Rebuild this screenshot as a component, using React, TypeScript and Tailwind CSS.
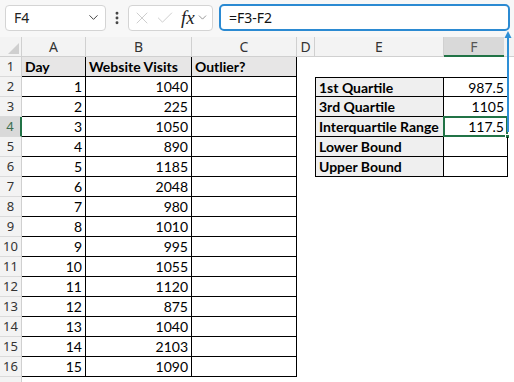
import { ChevronDown, EllipsisVertical, X, Check } from "lucide-react";

const visits = [
  [1, 1040], [2, 225], [3, 1050], [4, 890], [5, 1185], [6, 2048], [7, 980], [8, 1010],
  [9, 995], [10, 1055], [11, 1120], [12, 875], [13, 1040], [14, 2103], [15, 1090],
];

const stats: Record<number, [string, string]> = {
  2: ["1st Quartile", "987.5"],
  3: ["3rd Quartile", "1105"],
  4: ["Interquartile Range", "117.5"],
  5: ["Lower Bound", ""],
  6: ["Upper Bound", ""],
};

const cellFont = { fontFamily: "Lato, 'Liberation Sans', sans-serif" };
const uiFont = { fontFamily: "'Noto Sans', 'Open Sans', sans-serif" };

function RowHeader({ n }: { n: number }) {
  const active = n === 4;
  return (
    <div
      style={uiFont}
      className={`w-[22px] shrink-0 flex items-center justify-center text-[13px] border-b border-[#dadada] ${
        active
          ? "bg-[#d9d9d9] text-[#3b6e50] border-r-2 border-r-[#217346]"
          : "bg-[#f3f3f3] text-[#333] border-r border-r-[#d0d0d0]"
      }`}
    >
      {n}
    </div>
  );
}

function SheetRow({ n }: { n: number }) {
  const first = n === 1;
  const data = visits[n - 2];
  const stat = stats[n];
  return (
    <div className="flex h-5" style={cellFont}>
      <RowHeader n={n} />
      {/* A */}
      <div
        className={`w-[64px] shrink-0 border-b border-r border-black flex items-center text-[14px] ${
          first ? "bg-[#e7e6e6] font-bold pl-[3px]" : "justify-end pr-[3px]"
        }`}
      >
        {first ? "Day" : data?.[0]}
      </div>
      {/* B */}
      <div
        className={`w-[106px] shrink-0 border-b border-r border-black flex items-center text-[14px] ${
          first ? "bg-[#e7e6e6] font-bold pl-[3px]" : "justify-end pr-[3px]"
        }`}
      >
        {first ? "Website Visits" : data?.[1]}
      </div>
      {/* C */}
      <div
        className={`w-[105px] shrink-0 border-b border-r border-black flex items-center text-[14px] ${
          first ? "bg-[#e7e6e6] font-bold pl-[3px]" : ""
        }`}
      >
        {first ? "Outlier?" : ""}
      </div>
      {/* D */}
      <div className="w-[18px] shrink-0" />
      {stat ? (
        <>
          <div
            className={`w-[129px] shrink-0 bg-[#efefef] border-l border-b border-r border-black flex items-center pl-[3px] text-[14px] font-bold ${
              n === 2 ? "border-t" : ""
            }`}
          >
            {stat[0]}
          </div>
          <div
            className={`relative w-[64px] shrink-0 border-b border-r border-black flex items-center justify-end pr-[3px] text-[14px] ${
              n === 2 ? "border-t" : ""
            }`}
          >
            {stat[1]}
            {n === 4 && (
              <>
                <div className="absolute -left-[1px] -top-[1px] -right-[1px] -bottom-[1px] border-2 border-[#217346]" />
                <div className="absolute -right-[3px] -bottom-[3px] w-[5px] h-[5px] bg-[#217346] border border-white" />
              </>
            )}
          </div>
        </>
      ) : (
        <>
          <div className="w-[129px] shrink-0" />
          <div className="w-[64px] shrink-0" />
        </>
      )}
    </div>
  );
}

export default function App() {
  const cols = [
    { l: "A", w: "w-[64px]" },
    { l: "B", w: "w-[106px]" },
    { l: "C", w: "w-[105px]" },
    { l: "D", w: "w-[18px]" },
    { l: "E", w: "w-[129px]" },
  ];
  return (
    <div className="relative w-[514px] h-[382px] overflow-hidden bg-white" style={uiFont}>
      {/* formula bar */}
      <div className="h-[37px] bg-[#f7f7f7] flex items-center pb-[2px] pl-[5px]">
        <div className="w-[101px] h-[26px] bg-white border border-[#d4d4d4] rounded-[4px] flex items-center justify-between pl-2 pr-[4px] text-[14px] text-[#222]">
          <span>F4</span>
          <ChevronDown size={15} strokeWidth={1.6} className="text-[#444]" />
        </div>
        <EllipsisVertical size={16} strokeWidth={2.4} className="ml-[3px] text-[#444]" />
        <div className="ml-[3px] w-[85px] h-[26px] bg-white border border-[#d4d4d4] rounded-[4px] flex items-center pl-[3px] pr-[2px]">
          <X size={20} strokeWidth={1} className="text-[#c4c4c4]" />
          <Check size={20} strokeWidth={1} className="ml-[3px] text-[#c4c4c4]" />
          <span
            className="ml-[6px] italic text-[19px] text-[#222] leading-none"
            style={{ fontFamily: "'Liberation Serif', serif" }}
          >
            fx
          </span>
          <ChevronDown size={13} strokeWidth={1.4} className="ml-[1px] text-[#777]" />
        </div>
        <div className="ml-[6px] w-[291px] h-[27px] bg-white border-2 border-[#2b8ad2] rounded-[5px] flex items-center pl-[8px] text-[14px] text-[#111]">
          =F3-F2
        </div>
      </div>

      {/* column headers */}
      <div className="flex h-5 text-[14px] text-[#333]">
        <div className="w-[22px] shrink-0 bg-[#f3f3f3] border-r border-b border-[#d0d0d0] relative">
          <svg className="absolute right-[2px] bottom-[2px]" width="11" height="11" viewBox="0 0 11 11">
            <polygon points="11,0 11,11 0,11" fill="#cfcfcf" />
          </svg>
        </div>
        {cols.map((c) => (
          <div
            key={c.l}
            className={`${c.w} shrink-0 bg-[#f3f3f3] border-r border-b border-[#d0d0d0] flex items-center justify-center`}
          >
            {c.l}
          </div>
        ))}
        <div className="w-[60px] shrink-0 bg-[#d9d9d9] border-b-2 border-[#217346] flex items-center justify-center text-[#555]">
          F
        </div>
        <div className="flex-1 bg-[#f3f3f3] border-b border-[#d0d0d0]" />
      </div>

      {/* rows */}
      {Array.from({ length: 16 }, (_, i) => (
        <SheetRow key={i + 1} n={i + 1} />
      ))}
      <div className="flex h-[5px]">
        <div className="w-[22px] bg-[#f3f3f3] border-r border-[#d0d0d0]" />
      </div>

      {/* trace arrow from formula bar to F4 */}
      <svg className="absolute left-[503px] top-[30px]" width="10" height="104" viewBox="0 0 10 104">
        <line x1="5" y1="5" x2="5" y2="102" stroke="#2e8fd6" strokeWidth="2" />
        <polygon points="5,1 1.5,8 8.5,8" fill="#2e8fd6" />
      </svg>
    </div>
  );
}
